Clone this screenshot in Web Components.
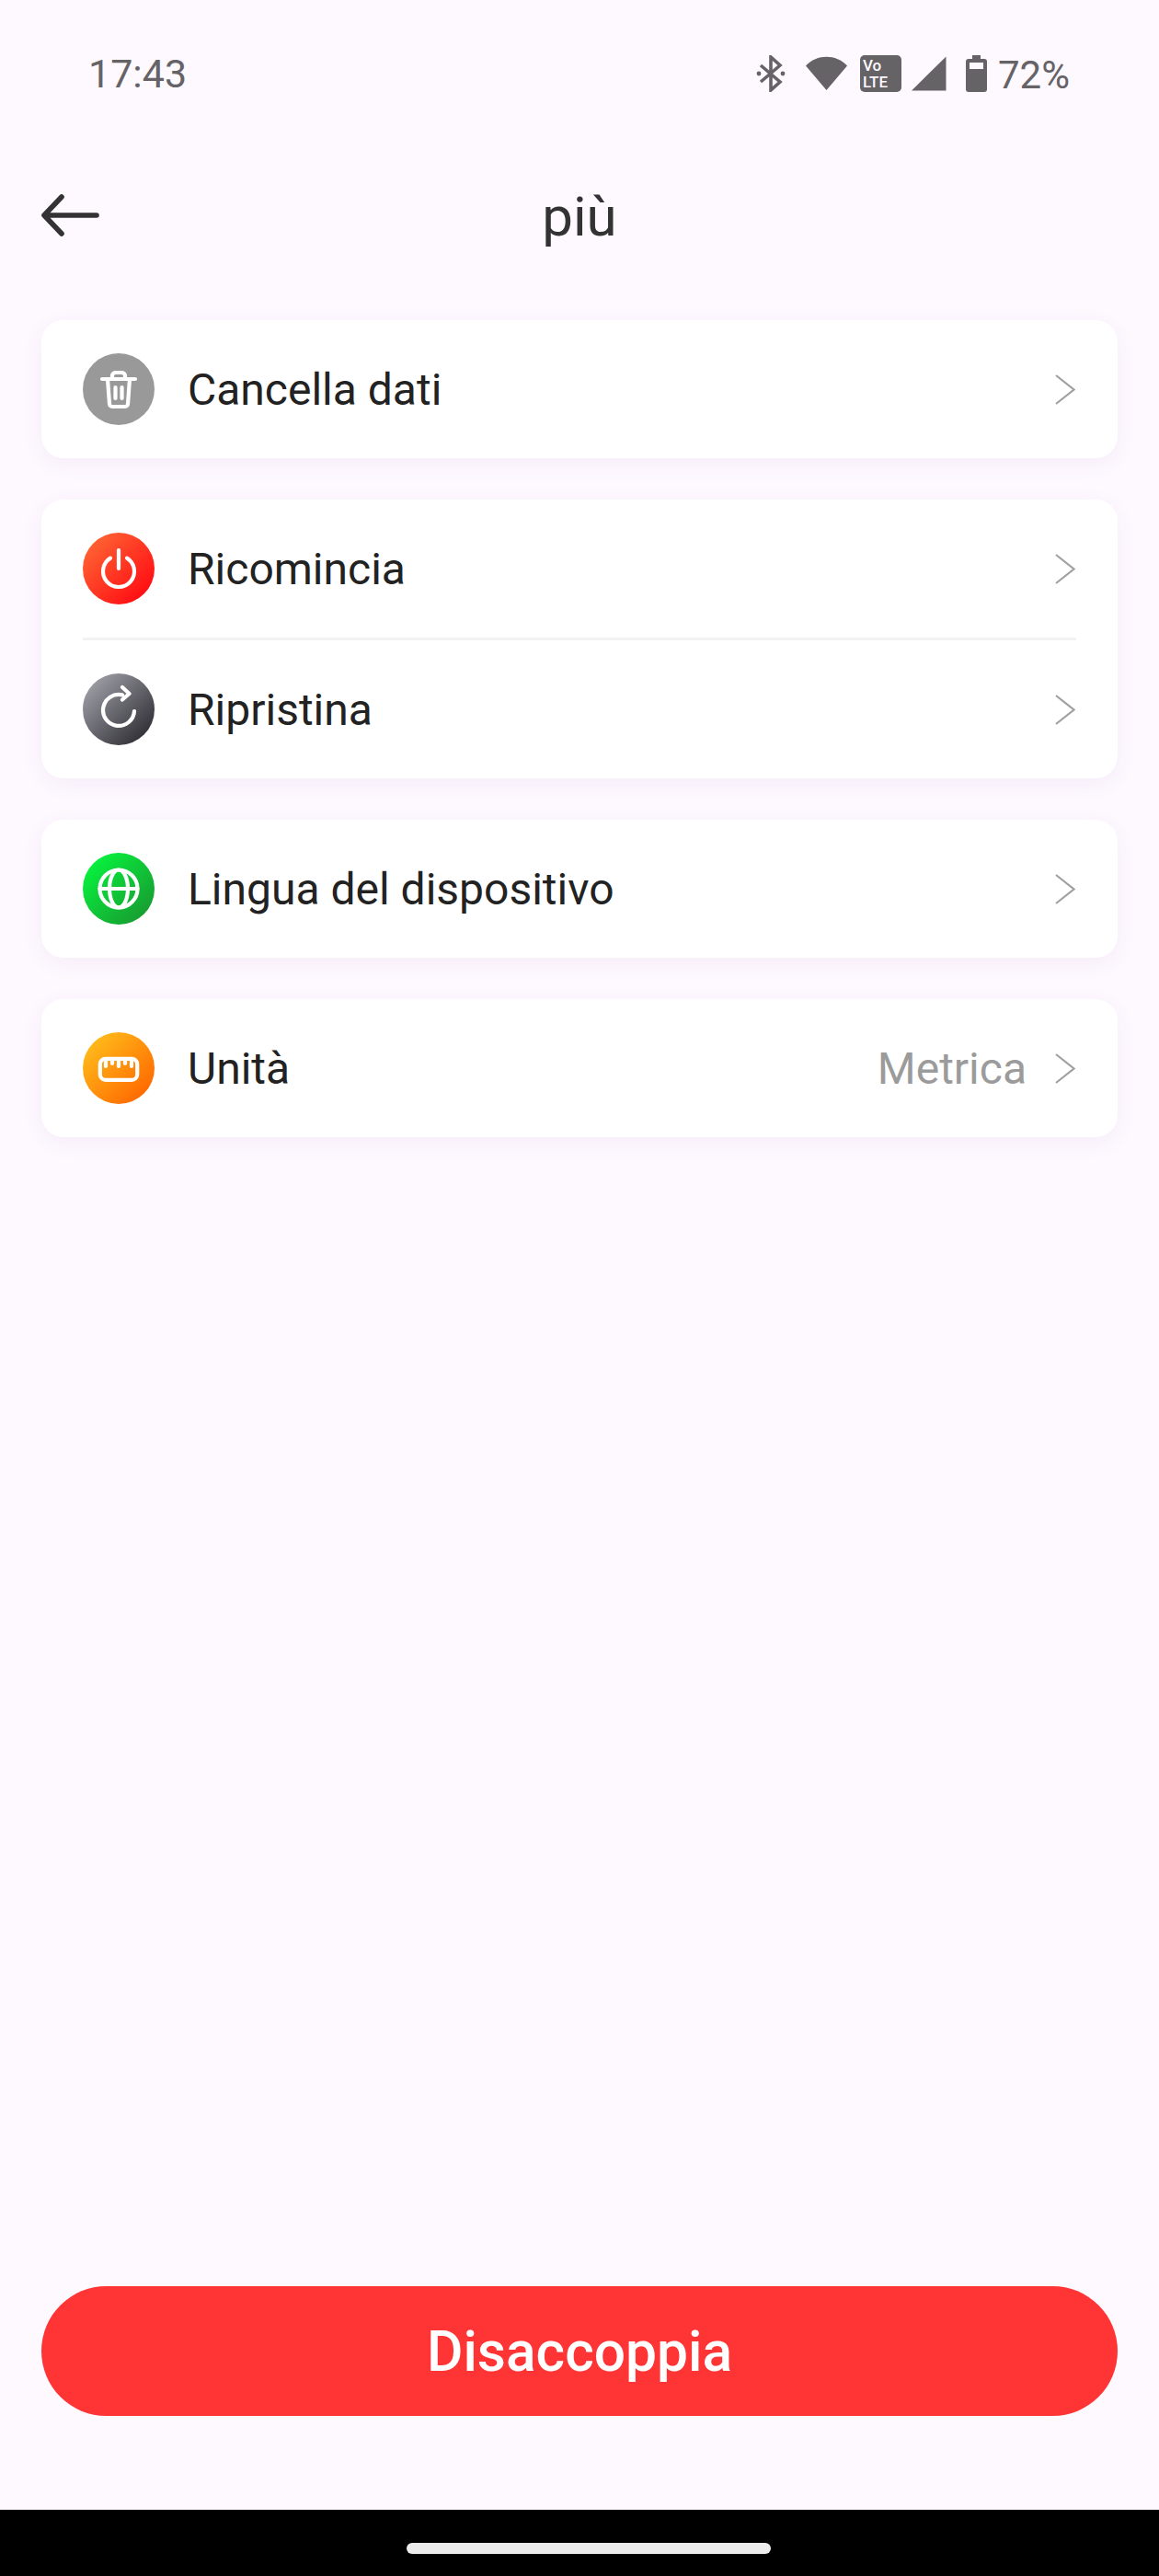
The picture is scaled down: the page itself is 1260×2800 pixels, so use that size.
<!DOCTYPE html>
<html lang="it">
<head>
<meta charset="utf-8">
<title>più</title>
<style>
  html, body { margin: 0; padding: 0; background: #fef8ff; }
  body { font-family: Roboto, "Liberation Sans", sans-serif; }
</style>
</head>
<body>
<more-screen>
  <status-bar slot="status" time="17:43" battery="72%"></status-bar>
  <app-header slot="header" title="più"></app-header>

  <settings-card>
    <settings-row label="Cancella dati">
      <icon-badge slot="icon" kind="trash"></icon-badge>
    </settings-row>
  </settings-card>

  <settings-card>
    <settings-row label="Ricomincia" divider>
      <icon-badge slot="icon" kind="power"></icon-badge>
    </settings-row>
    <settings-row label="Ripristina">
      <icon-badge slot="icon" kind="reset"></icon-badge>
    </settings-row>
  </settings-card>

  <settings-card>
    <settings-row label="Lingua del dispositivo">
      <icon-badge slot="icon" kind="globe"></icon-badge>
    </settings-row>
  </settings-card>

  <settings-card>
    <settings-row label="Unità" value="Metrica">
      <icon-badge slot="icon" kind="ruler"></icon-badge>
    </settings-row>
  </settings-card>

  <action-button slot="action">Disaccoppia</action-button>
  <nav-bar slot="nav"></nav-bar>
</more-screen>

<script>
class MoreScreen extends HTMLElement {
  constructor() {
    super();
    this.attachShadow({ mode: "open" }).innerHTML = `
      <style>
        :host { display: flex; flex-direction: column; height: 2800px; background: #fef8ff; }
        .cards { display: flex; flex-direction: column; gap: 45px; padding: 0 45px; flex: 1; }
        .action { padding: 0 45px 102px; }
      </style>
      <slot name="status"></slot>
      <slot name="header"></slot>
      <div class="cards"><slot></slot></div>
      <div class="action"><slot name="action"></slot></div>
      <slot name="nav"></slot>
    `;
  }
}

class StatusBar extends HTMLElement {
  constructor() {
    super();
    this.attachShadow({ mode: "open" });
  }
  connectedCallback() {
    const time = this.getAttribute("time") || "";
    const battery = this.getAttribute("battery") || "";
    this.shadowRoot.innerHTML = `
      <style>
        :host { display: flex; align-items: center; height: 160px; padding: 0 97px 0 96px; box-sizing: border-box;
          color: #666366; font-family: Roboto, sans-serif; font-size: 43px; }
        .time { flex: 1; }
        .icons { display: flex; align-items: center; }
        svg { display: block; }
        .pct { margin-left: 12px; font-size: 42px; line-height: 40px; position: relative; top: 2px; }
      </style>
      <span class="time">${time}</span>
      <div class="icons">
        <svg width="32" height="40" viewBox="0 0 32 40" fill="none" stroke="#666366" stroke-width="3.6">
          <path d="M5 11 L26 29 L16 38 V2 L26 11 L5 29"/>
          <circle cx="3" cy="20" r="2.4" fill="#666366" stroke="none"/>
          <circle cx="29" cy="20" r="2.4" fill="#666366" stroke="none"/>
        </svg>
        <svg style="margin-left:22px" width="45" height="38" viewBox="0 0 45 38" fill="#666366">
          <path d="M0 10.5 C12 -2.5 33 -2.5 45 10.5 L22.5 37 Z"/>
        </svg>
        <svg style="margin-left:14px" width="45" height="40" viewBox="0 0 45 40">
          <rect width="45" height="40" rx="5" fill="#666366"/>
          <text x="3" y="17" font-family="Roboto, sans-serif" font-size="17" font-weight="500" fill="#fef8ff">Vo</text>
          <text x="3" y="35" font-family="Roboto, sans-serif" font-size="17" font-weight="500" fill="#fef8ff">LTE</text>
        </svg>
        <svg style="margin-left:11px" width="38" height="38" viewBox="0 0 38 38" fill="#666366">
          <path d="M37.5 0.5 V37.5 H0 Z"/>
        </svg>
        <svg style="margin-left:21px" width="23" height="40" viewBox="0 0 23 40">
          <path fill="#666366" fill-rule="evenodd" d="M7 0 H16 V4 H20 A3 3 0 0 1 23 7 V37 A3 3 0 0 1 20 40 H3 A3 3 0 0 1 0 37 V7 A3 3 0 0 1 3 4 H7 Z M4 8 V15 H19 V8 Z"/>
        </svg>
        <span class="pct">${battery}</span>
      </div>
    `;
  }
}

class AppHeader extends HTMLElement {
  constructor() {
    super();
    this.attachShadow({ mode: "open" });
  }
  connectedCallback() {
    this.shadowRoot.innerHTML = `
      <style>
        :host { display: grid; grid-template-columns: 1fr auto 1fr; align-items: center; height: 188px; padding: 0 45px 44px;
          box-sizing: border-box; font-family: Roboto, sans-serif; color: #333; }
        .title { font-size: 60px; line-height: 70px; position: relative; top: 4px; }
        svg { display: block; position: relative; top: 2px; }
      </style>
      <svg width="64" height="46" viewBox="0 0 64 46" fill="none" stroke="#333" stroke-width="5.6" stroke-linecap="round" stroke-linejoin="round">
        <path d="M60 23 H3 M22 3 L3 23 L22 43"/>
      </svg>
      <span class="title">${this.getAttribute("title") || ""}</span>
      <span></span>
    `;
  }
}

class SettingsCard extends HTMLElement {
  constructor() {
    super();
    this.attachShadow({ mode: "open" }).innerHTML = `
      <style>
        :host { display: block; background: #fff; border-radius: 24px; box-shadow: 0 6px 24px rgba(110, 60, 150, 0.06); }
      </style>
      <slot></slot>
    `;
  }
}

class SettingsRow extends HTMLElement {
  constructor() {
    super();
    this.attachShadow({ mode: "open" });
  }
  connectedCallback() {
    const value = this.getAttribute("value");
    const divider = this.hasAttribute("divider");
    this.shadowRoot.innerHTML = `
      <style>
        :host { display: block; font-family: Roboto, sans-serif; }
        .row { display: flex; align-items: center; height: 150px; padding: 0 46px 0 45px; box-sizing: border-box; }
        .label { flex: 1; margin-left: 36px; font-size: 48px; color: #222; }
        .value { font-size: 48px; color: #9b9b9b; margin-right: 31px; }
        .chev { display: block; }
        .line { height: 3px; margin: 0 45px; background: #f3f2f3; }
      </style>
      <div class="row">
        <slot name="icon"></slot>
        <span class="label">${this.getAttribute("label") || ""}</span>
        ${value ? `<span class="value">${value}</span>` : ""}
        <svg class="chev" width="22" height="33" viewBox="0 0 22 33" fill="none" stroke="#a0a0a0" stroke-width="2.2">
          <path d="M1 1 L20.5 16.5 L1 32"/>
        </svg>
      </div>
      ${divider ? `<div class="line"></div>` : ""}
    `;
  }
}

// viewBox is the 78px circle itself, strokes are white
const BADGE_ICONS = {
  trash: {
    bg: "#999999",
    svg: `<path d="M21 28 H57 M32 28 V24 A4 4 0 0 1 36 21 H42 A4 4 0 0 1 46 24 V28 M27 28 L29 55 A3 3 0 0 0 32 58 H46 A3 3 0 0 0 49 55 L51 28 M35.5 37 V49 M42.5 37 V49"/>`
  },
  power: {
    bg: "linear-gradient(135deg, #ff7038 0%, #ff0a12 90%)",
    svg: `<path d="M30 27.6 A17 17 0 1 0 48 27.6 M39 19 V39"/>`
  },
  reset: {
    bg: "linear-gradient(135deg, #adadb5 0%, #2e2d34 90%)",
    svg: `<path d="M43 23.4 A17 17 0 1 0 56 41 M43 15 L50.5 22 L43 28.5"/>`
  },
  globe: {
    bg: "linear-gradient(135deg, #05ff40 0%, #189a30 90%)",
    svg: `<circle cx="39" cy="39" r="20.5"/><ellipse cx="39" cy="39" rx="10" ry="20.5"/><path d="M18.5 39 H59.5"/>`
  },
  ruler: {
    bg: "linear-gradient(135deg, #ffc81e 0%, #ff6600 90%)",
    svg: `<rect x="18.8" y="28.8" width="40.4" height="23" rx="6"/><path d="M25 29 V37 M32 29 V34 M39 29 V37 M46 29 V34 M53 29 V37"/>`
  }
};

class IconBadge extends HTMLElement {
  constructor() {
    super();
    this.attachShadow({ mode: "open" });
  }
  connectedCallback() {
    const icon = BADGE_ICONS[this.getAttribute("kind")];
    this.shadowRoot.innerHTML = `
      <style>
        :host { display: block; width: 78px; height: 78px; border-radius: 50%; flex: none; background: ${icon.bg}; }
        svg { display: block; }
      </style>
      <svg width="78" height="78" viewBox="0 0 78 78" fill="none" stroke="#fff" stroke-width="4.2" stroke-linecap="round" stroke-linejoin="round">${icon.svg}</svg>
    `;
  }
}

class ActionButton extends HTMLElement {
  constructor() {
    super();
    this.attachShadow({ mode: "open" }).innerHTML = `
      <style>
        :host { display: flex; align-items: center; justify-content: center; height: 141px; border-radius: 71px;
          background: #ff3535; color: #fff; font-family: Roboto, sans-serif; font-size: 60.5px; font-weight: 500; }
        span { position: relative; top: 1px; }
      </style>
      <span><slot></slot></span>
    `;
  }
}

class NavBar extends HTMLElement {
  constructor() {
    super();
    this.attachShadow({ mode: "open" }).innerHTML = `
      <style>
        :host { display: flex; justify-content: center; height: 72px; padding-top: 36px; box-sizing: border-box; background: #000; }
        .pill { width: 396px; height: 12px; margin-left: 20px; border-radius: 6px; background: #ececec; }
      </style>
      <div class="pill"></div>
    `;
  }
}

customElements.define("more-screen", MoreScreen);
customElements.define("status-bar", StatusBar);
customElements.define("app-header", AppHeader);
customElements.define("settings-card", SettingsCard);
customElements.define("settings-row", SettingsRow);
customElements.define("icon-badge", IconBadge);
customElements.define("action-button", ActionButton);
customElements.define("nav-bar", NavBar);
</script>
</body>
</html>
